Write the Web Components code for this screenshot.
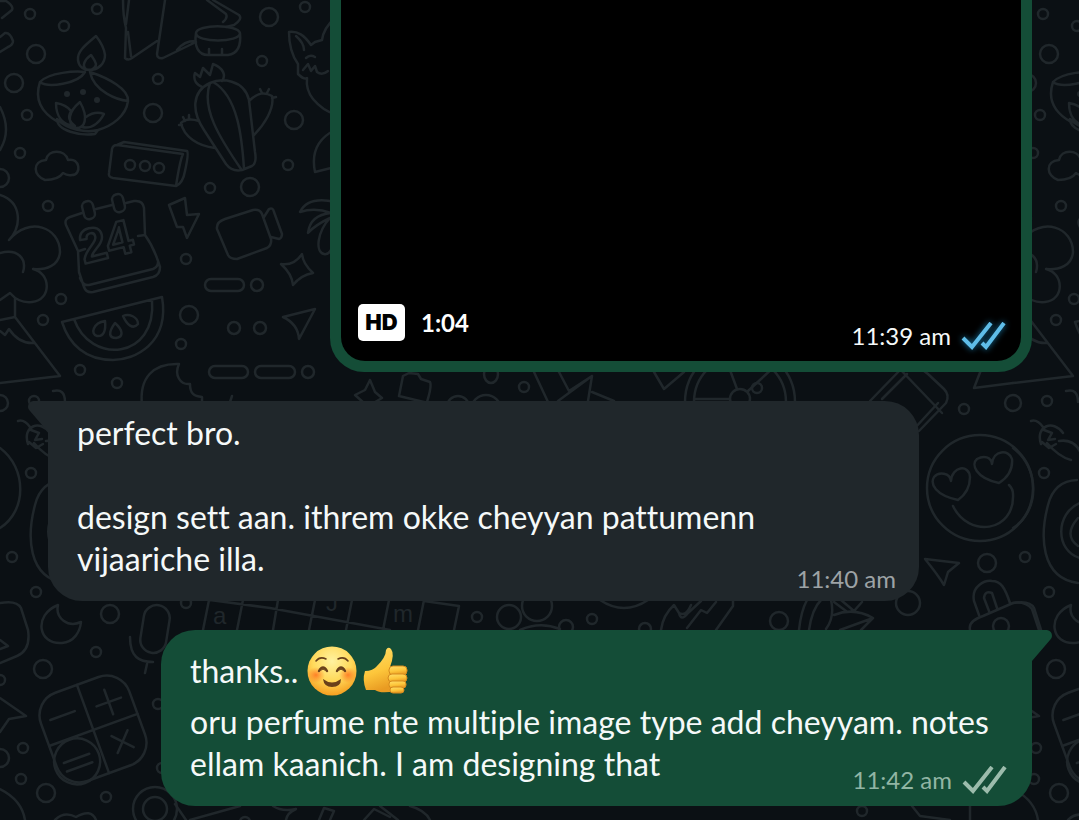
<!DOCTYPE html>
<html lang="ml-Latn">
<head>
<meta charset="utf-8">
<meta name="viewport" content="width=device-width, initial-scale=1">
<title>Chat</title>
<style>
  html { background: #0b1014; }
  body { margin: 0; font-family: Lato, "Open Sans", sans-serif; font-variant-ligatures: none; color: #f5f9f9; }
</style>
</head>
<body>
<chat-thread>
  <video-message duration="1:04" time="11:39 am"></video-message>
  <chat-message side="in" time="11:40 am">
    <text-line>perfect bro.</text-line>
    <text-line></text-line>
    <text-line>design sett aan. ithrem okke cheyyan pattumenn</text-line>
    <text-line>vijaariche illa.</text-line>
  </chat-message>
  <chat-message side="out" time="11:42 am">
    <text-line tall>thanks.. <chat-emoji name="smile"></chat-emoji><chat-emoji name="thumb"></chat-emoji></text-line>
    <text-line>oru perfume nte multiple image type add cheyyam. notes</text-line>
    <text-line>ellam kaanich. I am designing that</text-line>
  </chat-message>
</chat-thread>

<script>
const define = (name, html, setup) => customElements.define(name, class extends HTMLElement {
  connectedCallback() {
    if (this.shadowRoot) return;
    const root = this.attachShadow({ mode: "open" });
    root.innerHTML = html;
    if (setup) setup(this, root);
  }
});

define("doodle-wallpaper", `
<style>
  :host { display: block; position: absolute; inset: 0; overflow: hidden; z-index: -1; }
  svg { display: block; width: 100%; height: 100%; fill: none; stroke: #20272b; stroke-width: 2.5; stroke-linecap: round; stroke-linejoin: round; }
  text { font-family: "Liberation Sans", sans-serif; }
</style>
<svg aria-hidden="true">
  <g id="tile">
    <g id="dots">
      <circle cx="30" cy="14" r="5"/><circle cx="97" cy="9" r="5"/><circle cx="64" cy="26" r="5"/><circle cx="36" cy="54" r="9"/><circle cx="14" cy="83" r="9"/>
      <circle cx="27" cy="115" r="5"/><circle cx="20" cy="153" r="5"/><circle cx="158" cy="79" r="5"/><circle cx="153" cy="113" r="9"/><circle cx="269" cy="17" r="9"/>
      <circle cx="305" cy="7" r="5"/><circle cx="262" cy="61" r="5"/><circle cx="294" cy="120" r="9"/><circle cx="288" cy="165" r="5"/><circle cx="210" cy="188" r="5"/>
      <circle cx="250" cy="187" r="9"/><circle cx="48" cy="206" r="5"/><circle cx="186" cy="259" r="5"/><circle cx="257" cy="285" r="6"/><circle cx="189" cy="315" r="9"/>
      <circle cx="234" cy="328" r="6"/><circle cx="260" cy="328" r="6"/><circle cx="61" cy="299" r="5"/><circle cx="43" cy="320" r="5"/><circle cx="181" cy="344" r="5"/>
      <circle cx="80" cy="370" r="5"/><circle cx="117" cy="383" r="5"/><circle cx="308" cy="372" r="6"/><circle cx="34" cy="401" r="5"/><circle cx="0" cy="403" r="8"/>
      <circle cx="31" cy="473" r="5"/><circle cx="12" cy="557" r="5"/><circle cx="36" cy="592" r="5"/><circle cx="110" cy="614" r="9"/><circle cx="186" cy="603" r="5"/>
      <circle cx="96" cy="652" r="5"/><circle cx="43" cy="669" r="9"/><circle cx="0" cy="680" r="5"/><circle cx="158" cy="704" r="5"/><circle cx="23" cy="748" r="5"/>
      <circle cx="0" cy="758" r="9"/><circle cx="21" cy="779" r="5"/><circle cx="46" cy="793" r="9"/><circle cx="106" cy="797" r="5"/><circle cx="162" cy="768" r="5"/>
      <circle cx="0" cy="178" r="9"/>
    </g>
    <!-- pencil ends -->
    <path d="M0 1 6 1Q14 6 12 10L2 18M0 37 5 33Q10 32 13 41 13 45 8 47L0 52"/>
    <!-- oil lamp with flame -->
    <path d="M96 36C84 46 77 52 78 60 79 68 85 70 89 70 99 70 105 63 105 55 104 47 100 41 96 36ZM91 55C84 60 82 66 86 69 90 71 96 69 96 64 95 60 93 58 91 55ZM85 72C76 71 49 72 40 82 48 88 78 84 85 72ZM90 72C94 92 118 100 128 101M40 82C34 100 42 113 58 122M90 72C108 78 129 89 128 101 126 116 112 126 98 130M57 119C57 131 80 136 95 134L98 130C86 133 68 130 57 119M56 103C62 104 68 107 71 111 67 118 70 122 75 126 62 125 56 116 56 103ZM80 102C68 112 67 122 75 128 85 129 89 118 80 102ZM86 117C93 112 99 112 104 114 98 125 91 129 82 127"/>
    <g fill="#20272b" stroke="none"><circle cx="67" cy="94" r="3"/><circle cx="83" cy="92" r="3"/><circle cx="97" cy="100" r="3"/></g>
    <!-- folded map and drum -->
    <path d="M123 0Q123 16 126 28L125 58Q128 61 132 58L157 41M129 0 126 24M131 56 128 32M165 0 157 54Q157 59 163 58L196 42M177 50Q184 41 195 41M207 0 226 14Q228 18 223 22M213 0 239 15Q243 19 234 25L226 27"/>
    <path d="M196 33C197 24 238 24 240 33 240 43 196 43 196 33ZM196 33C194 46 198 55 208 55L228 55Q242 53 240 33M209 49V54M222 49V54"/>
    <!-- cloud -->
    <path d="M45 180C33 176 32 161 46 160 48 149 65 149 68 160 80 157 82 175 72 175 68 176 66 175 63 173 59 179 50 180 45 180Z"/>
    <!-- speaker -->
    <path d="M117 145 183 154Q180 160 176 186L113 178Q108 177 109 173L112 149Q113 145 117 145L124 142 187 151Q189 153 185 171 183 183 176 186"/>
    <circle cx="130" cy="165" r="5"/><circle cx="145" cy="166" r="5"/><circle cx="159" cy="168" r="5"/>
    <!-- cactus -->
    <path d="M202 87C193 83 194 76 195 73L200 77 203 68 210 75 213 64C224 68 226 76 222 81M210 83C191 92 192 112 204 130L226 164Q232 172 242 170L252 166Q257 163 255 152L249 100C244 79 221 78 210 83ZM210 83C201 108 219 137 241 169M213 82C238 96 242 138 244 169M249 101C258 92 265 92 272 96 275 109 263 126 254 135M199 121C189 118 184 120 181 123 184 137 198 146 215 148M260 89 262 93M269 89 267 93M276 97 272 98M179 125 182 125M183 117 185 121M189 115 189 119"/>
    <!-- fox -->
    <path d="M335 18C327 25 323 32 322 40L315 42 311 45C304 35 298 31 289 32 289 46 293 57 298 64L298 74Q304 80 307 78C306 87 309 94 313 99 318 105 324 111 335 114M296 36Q304 43 304 50M306 58Q310 54 315 57M303 70 308 64 311 71 315 66 317 72Q322 76 328 71"/>
    <path d="M335 130Q309 143 315 172L335 167M0 107Q12 130 0 150"/>
    <!-- calendar -->
    <path d="M82 213 70 217Q64 219 66 225L78 251 79 272 84 287Q86 293 93 292L153 277Q160 275 160 267L158 261Q153 246 145 235L144 208Q143 200 134 201L126 203M96 209 112 205M79 251 85 249M138 236 145 235M80 278Q83 286 89 285L153 269Q158 267 158 262"/>
    <rect x="83" y="201" width="11" height="18" rx="5" transform="rotate(-14 89 210)"/><rect x="113" y="194" width="11" height="18" rx="5" transform="rotate(-14 119 203)"/>
    <text x="84" y="264" font-size="48" font-weight="700" transform="rotate(-14 84 264)">24</text>
    <!-- lightning and camera -->
    <path d="M169 205 185 198 187 215 199 214 187 238 183 227 177 227ZM225 219 253 210Q260 209 262 214L271 239Q272 245 267 248L237 259Q230 259 228 255L217 229Q216 222 225 219ZM264 217 269 209Q273 207 274 212L282 234Q282 238 279 239L271 237"/>
    <!-- palm -->
    <path d="M335 202Q308 196 300 212 315 207 331 213 310 215 308 233 315 225 330 218C317 232 315 252 324 254Q328 255 331 250"/>
    <path d="M302 254Q303 264 313 273 301 275 293 285 292 274 281 264 294 266 302 254ZM283 317 315 309 299 339Q298 324 283 317Z"/>
    <rect x="205" y="279" width="39" height="12" rx="6"/><rect x="209" y="366" width="39" height="12" rx="6"/><rect x="255" y="366" width="40" height="12" rx="6"/>
    <!-- watermelon -->
    <path d="M62 322 162 297C170 344 134 360 113 360 85 360 69 344 62 322ZM74 319C90 365 157 360 152 300M105 321C93 323 90 334 97 336 104 337 106 330 105 321ZM115 323C107 334 110 338 116 338 124 337 123 330 115 323ZM123 316C129 313 138 317 138 324 133 330 127 325 123 316Z"/>
    <!-- tree and mountain -->
    <path d="M0 195C22 202 22 226 9 240 29 216 60 227 60 252 59 266 46 270 33 269 51 273 52 300 32 302 22 303 16 300 10 293L0 300M0 253C18 248 27 259 23 272M15 298V317L0 320M15 317 60 376 0 383M0 331 5 335 9 329Q19 344 34 343"/>
    <!-- bitten cookie -->
    <path d="M142 405C139 378 153 363 179 364 174 375 180 385 190 384 190 394 194 396 202 397V405M53 391Q65 388 65 402M232 396 228 408"/>
    <!-- chilli, coil -->
    <path d="M18 421Q24 419 30 427M28 444C22 426 40 419 50 433M31 430 39 433 35 440 42 439M29 442 36 448 43 444M34 443Q46 457 58 460M46 441Q64 438 70 459M0 448C27 468 27 511 0 528M64 480Q41 481 35 505C27 535 27 578 65 583M67 503C42 513 42 551 67 558M65 518Q50 535 65 546"/>
    <!-- moon and microphone -->
    <path d="M58 605C33 615 38 645 62 643 74 642 80 632 81 622 68 628 55 618 58 605ZM130 637C130 657 139 662 153 662M147 664 145 673M0 603Q17 600 21 608L28 630Q31 650 17 656L0 663M0 640 8 646 0 649M0 698 26 716 9 719 0 732M0 789Q22 800 25 820"/>
    <rect x="142" y="605" width="26" height="48" rx="13" transform="rotate(9 155 629)"/>
    <!-- calculator keys -->
    <g transform="rotate(-20 93 729)"><rect x="46" y="682" width="94" height="94" rx="24"/><path d="M93 682V776M46 730H140M56 706H82M104 709H130M117 696V722M108 742 125 760M125 742 108 760"/><circle cx="67" cy="754" r="23"/><path d="M54 751H81M54 760H81"/></g>
    <circle cx="155" cy="809" r="22"/><circle cx="155" cy="809" r="12"/>
    <path d="M55 820Q64 811 76 817 91 808 96 820"/>
  </g>
  <use href="#tile" x="1013"/>
  <!-- strip between the video and the first reply -->
  <path d="M370 380 375 392 382 398 370 405M370 380 365 390 355 395 364 403M399 396 403 376 409 373 418 374 421 379 430 382Q432 386 427 402M399 396 428 403M534 372 548 402M559 372 569 391 592 376M558 401 592 376 588 401M592 392 614 401M654 372 664 389 684 372"/>
  <ellipse cx="491" cy="374" rx="7" ry="9"/><circle cx="524" cy="387" r="5"/><circle cx="757" cy="388" r="5"/><circle cx="458" cy="407" r="11"/><circle cx="486" cy="410" r="15"/>
  <circle cx="740" cy="402" r="55"/><circle cx="740" cy="402" r="46"/><circle cx="740" cy="399" r="10"/><path d="M737 389 730 370M748 391 775 366M730 399H694"/>
  <path d="M870 401 903 367Q914 362 928 374L944 389Q950 395 946 403L919 431M897 366 942 413M914 429 938 403M882 399 907 374"/>
  <path d="M1013 383 974 388 981 370"/>
  <circle cx="964" cy="409" r="5"/>
  <!-- heart-eyed face -->
  <circle cx="980" cy="488" r="53"/>
  <path d="M958 500C935 495 930 484 934 477 939 471 950 473 951 481 952 466 969 464 970 477 970 488 965 495 958 500ZM999 483C975 478 971 464 977 459 984 455 991 457 992 464 993 450 1009 449 1012 459 1013 470 1007 478 999 483ZM953 506C968 538 1015 533 1013 494 1013 490 1011 487 1009 485"/>
  <path d="M925 559 959 563 948 572 944 585Q938 575 925 559Z"/><circle cx="987" cy="563" r="9"/><circle cx="908" cy="603" r="12"/>
  <path d="M970 630Q968 621 983 616L1013 603Q1025 601 1032 609L1039 630M979 615 974 601C971 586 985 580 992 581 1001 581 1005 588 1010 603M989 611 984 598Q985 590 992 593L997 608"/><circle cx="1001" cy="626" r="8"/>
  <!-- keyboard, hands and leaf strip -->
  <path d="M209 600 203 630M243 600 237 630M278 600 273 630M315 600 309 630M352 600 346 630M389 600 383 630M210 600 270 608 390 630M424 600 418 630M424 601 459 606 454 630M600 600Q624 616 648 600M661 630Q663 615 674 605L679 613Q686 617 691 605M679 613Q681 622 688 613L701 601M687 628 701 610 707 613 716 602M716 630 733 606V600M799 630Q801 611 807 600M809 630Q812 609 821 600M831 600Q835 617 826 629M834 615Q854 607 873 618L861 630M840 630 873 618M834 602 846 611M841 600 854 611 862 602"/>
  <circle cx="477" cy="617" r="5"/><circle cx="509" cy="617" r="12"/><circle cx="537" cy="606" r="15"/><circle cx="566" cy="627" r="7"/><circle cx="592" cy="619" r="5"/><circle cx="645" cy="629" r="6"/><circle cx="779" cy="621" r="9"/><path d="M520 630Q540 621 560 629"/>
  <g font-size="24" fill="#20272b" stroke="none"><text x="213" y="624">a</text><text x="326" y="611">J</text><text x="393" y="622">m</text></g>
  <!-- bottom edge -->
  <path d="M175 804 186 820M190 820 240 806M273 806Q282 812 296 809 287 813 286 820M319 820 324 808 334 811 330 820M364 820 374 809 390 817M380 806 398 820M410 806Q425 810 430 820M912 806 920 816 950 820M970 806V820"/>
  <circle cx="862" cy="811" r="5"/><circle cx="245" cy="822" r="5"/>
</svg>`);

define("chat-thread", `
<style>
  :host { display: block; position: relative; isolation: isolate; box-sizing: border-box; min-height: 100vh; overflow: hidden; background: #0b1014; }
  main { display: flex; flex-direction: column; gap: 29px; padding: 0 47px 14px 48px; }
</style>
<doodle-wallpaper></doodle-wallpaper>
<main><slot></slot></main>`);

define("read-ticks", `
<style>
  :host { display: block; color: #9cbcac; }
  :host([seen]) { color: #5fbde8; filter: drop-shadow(0 0 3px #1678a8); }
  svg { display: block; fill: none; stroke: currentColor; stroke-width: 4; }
</style>
<svg width="45" height="28" viewBox="0 0 45 28" role="img" aria-label="Delivered"><path d="M2 16 11 25 30 1M21 21 25 25 43 1"/></svg>`);

define("message-meta", `
<style>
  :host { display: flex; align-items: center; gap: 10px; font-size: 24px; line-height: 28px; white-space: nowrap; }
</style>
<slot></slot>`);

define("video-message", `
<style>
  :host { display: block; align-self: flex-end; box-sizing: border-box; width: calc(100% - 282px); padding: 0 11px 11px; background: #144d37; border-radius: 0 0 34px 34px; }
  .media { display: flex; align-items: flex-end; justify-content: space-between; box-sizing: border-box; aspect-ratio: 680 / 361; padding: 0 15px 11px 17px; background: #000; border-radius: 0 0 24px 24px; }
  .info { display: flex; align-items: center; gap: 16px; padding-bottom: 9px; }
  .hd { box-sizing: border-box; width: 47px; border-radius: 5px; background: #fff; color: #000; text-align: center; font: 900 22px/37px Inter, sans-serif; }
  .duration { font-size: 24px; line-height: 37px; font-weight: 700; color: #fff; }
</style>
<div class="media">
  <div class="info"><span class="hd">HD</span><span class="duration"></span></div>
  <message-meta><time></time><read-ticks seen></read-ticks></message-meta>
</div>`, (el, root) => {
  root.querySelector(".duration").textContent = el.getAttribute("duration");
  root.querySelector("time").textContent = el.getAttribute("time");
});

define("chat-message", `
<style>
  :host { display: grid; position: relative; box-sizing: border-box; width: calc(100% - 113px); border-radius: 34px; background: var(--fill); }
  :host([side="in"]) { --fill: #20272b; --meta: #9da3a6; align-self: flex-start; border-top-left-radius: 0; }
  :host([side="out"]) { --fill: #144d37; --meta: #91b5a4; align-self: flex-end; border-top-right-radius: 0; }
  .body, message-meta { grid-area: 1 / 1; }
  .body { padding: 11px 28px 21px 29px; }
  message-meta { place-self: end; padding: 0 25px 12px 0; color: var(--meta); }
  :host([side="in"]) message-meta { padding: 0 23px 8px 0; }
  .tail { position: absolute; top: 0; left: 100%; width: 20px; height: 32px; fill: var(--fill); }
  :host([side="in"]) .tail { left: auto; right: 100%; transform: scaleX(-1); }
  :host([side="in"]) read-ticks { display: none; }
</style>
<svg class="tail" viewBox="0 0 20 32" aria-hidden="true"><path d="M0 0H15Q20 1 20 6 20 8 18 10L0 31Z"/></svg>
<div class="body"><slot></slot></div>
<message-meta><time></time><read-ticks></read-ticks></message-meta>`, (el, root) => {
  root.querySelector("time").textContent = el.getAttribute("time");
});

define("text-line", `
<style>
  :host { display: flex; align-items: center; min-height: 42px; font-size: 32px; line-height: 42px; white-space: pre-wrap; }
  :host([tall]) { min-height: 60px; }
</style>
<slot></slot>`);

const emojiArt = {
  smile: `<svg viewBox="0 0 50 50" role="img" aria-label="Smiling face"><defs><radialGradient id="f" cx=".5" cy=".3" r=".72"><stop offset="0" stop-color="#fff2a0"/><stop offset=".55" stop-color="#ffd95a"/><stop offset="1" stop-color="#f59b1c"/></radialGradient><radialGradient id="c"><stop offset="0" stop-color="#ff6b1c" stop-opacity=".8"/><stop offset="1" stop-color="#ff7a20" stop-opacity="0"/></radialGradient></defs><circle cx="25" cy="25" r="24.5" fill="url(#f)"/><ellipse cx="9" cy="29" rx="9" ry="8" fill="url(#c)"/><ellipse cx="41" cy="29" rx="9" ry="8" fill="url(#c)"/><g fill="none" stroke="#69401a" stroke-linecap="round"><path d="M9 15Q13 10 19 13M31 13Q37 10 41 15" stroke-width="1.6"/><path d="M12 25Q16 18 20 25M30 25Q34 18 38 25" stroke-width="2.4"/><path d="M14 24Q16 22 18 24M32 24Q34 22 36 24" stroke-width="1"/></g><path d="M16 33Q25 40 34 33 34 41 25 41 17 41 16 33Z" fill="#69401a"/></svg>`,
  thumb: `<svg viewBox="0 0 50 50" role="img" aria-label="Thumbs up"><defs><linearGradient id="t" x2=".3" y2="1"><stop offset="0" stop-color="#ffdf6b"/><stop offset=".6" stop-color="#fdc63b"/><stop offset="1" stop-color="#e99b22"/></linearGradient></defs><path d="M4 25Q12 25 16 20 25 11 25 4 27 0 30 3 34 8 29 21L38 26 34 45Q20 48 14 44L5 44Q1 34 4 25Z" fill="url(#t)"/><g fill="url(#t)" stroke="#d58a1d"><rect x="28" y="20" width="18" height="9" rx="4"/><rect x="27" y="28" width="19" height="8" rx="4"/><rect x="28" y="35" width="17" height="7" rx="3"/><rect x="29" y="41" width="14" height="6" rx="3"/></g></svg>`
};
customElements.define("chat-emoji", class extends HTMLElement {
  connectedCallback() {
    if (this.shadowRoot) return;
    this.attachShadow({ mode: "open" }).innerHTML = `
<style>
  :host { display: block; width: 50px; height: 50px; margin-right: 4px; white-space: normal; }
  svg { display: block; width: 100%; height: 100%; }
</style>` + emojiArt[this.getAttribute("name")];
  }
});
</script>
</body>
</html>
